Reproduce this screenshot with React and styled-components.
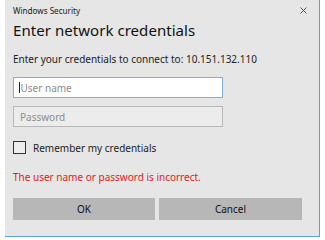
import React from "react";
import styled, { createGlobalStyle } from "styled-components";

const Global = createGlobalStyle`
  html, body { margin: 0; padding: 0; background: #ffffff; }
  body { font-family: "Noto Sans", "Open Sans", sans-serif; }
`;

const Page = styled.div`
  padding: 0 0 0 5px;
  width: 325px;
  height: 240px;
  box-sizing: border-box;
`;

const Dialog = styled.div`
  width: 315px;
  height: 237px;
  box-sizing: border-box;
  background: #e6e6e6;
  border-right: 1px solid #5aa0dc;
  border-bottom: 1px solid #5aa0dc;
  display: flex;
  flex-direction: column;
  align-items: flex-start;
  padding: 0 0 0 8px;
`;

const TitleBar = styled.div`
  align-self: stretch;
  display: flex;
  align-items: center;
  justify-content: space-between;
  height: 20px;
  padding-right: 12px;
`;

const TitleText = styled.span`
  font-size: 8.1px;
  color: #1a1a1a;
`;

const Close = styled.svg`
  width: 7px;
  height: 7px;
`;

const Heading = styled.h1`
  margin: 0;
  font-size: 15px;
  letter-spacing: 0.05px;
  font-weight: 400;
  color: #111;
  line-height: 20px;
`;

const Info = styled.p`
  margin: 12px 0 0;
  font-size: 10px;
  color: #222;
  line-height: 14px;
`;

const Input = styled.div`
  width: 210px;
  height: 21px;
  box-sizing: border-box;
  border: 1px solid ${(p) => (p.$focused ? "#7ab0e2" : "#b8b8b8")};
  background: ${(p) => (p.$focused ? "#ffffff" : "#ececec")};
  margin-top: ${(p) => p.$mt}px;
  display: flex;
  align-items: center;
  padding-left: ${(p) => (p.$focused ? 5 : 6)}px;
  font-size: 10px;
  color: #8c8c8c;
`;

const Caret = styled.span`
  width: 1px;
  height: 11px;
  background: #222;
  margin-right: 0.5px;
`;

const CheckRow = styled.div`
  display: flex;
  align-items: center;
  gap: 7px;
  height: 13px;
  margin-top: 14px;
  font-size: 10px;
  color: #222;
`;

const Box = styled.span`
  width: 13px;
  height: 13px;
  box-sizing: border-box;
  border: 1px solid #333;
  background: #eeeeee;
`;

const Error = styled.p`
  margin: 16px 0 0;
  font-size: 10px;
  color: #e21b1b;
  line-height: 14px;
`;

const Buttons = styled.div`
  display: flex;
  gap: 4px;
  margin-top: 14px;
`;

const Button = styled.button`
  width: ${(p) => p.$w}px;
  height: 22px;
  border: none;
  background: #b7b7b7;
  font-family: inherit;
  font-size: 10px;
  color: #111;
  padding: 0;
`;

export default function App() {
  return (
    <Page>
      <Global />
      <Dialog>
        <TitleBar>
          <TitleText>Windows Security</TitleText>
          <Close viewBox="0 0 7 7">
            <path d="M0.5 0.5 L6.5 6.5 M6.5 0.5 L0.5 6.5" stroke="#444" strokeWidth="0.9" />
          </Close>
        </TitleBar>
        <Heading>Enter network credentials</Heading>
        <Info>Enter your credentials to connect to: 10.151.132.110</Info>
        <Input $focused $mt={11}>
          <Caret />
          User name
        </Input>
        <Input $mt={8}>Password</Input>
        <CheckRow>
          <Box />
          Remember my credentials
        </CheckRow>
        <Error>The user name or password is incorrect.</Error>
        <Buttons>
          <Button $w={142}>OK</Button>
          <Button $w={143}>Cancel</Button>
        </Buttons>
      </Dialog>
    </Page>
  );
}
